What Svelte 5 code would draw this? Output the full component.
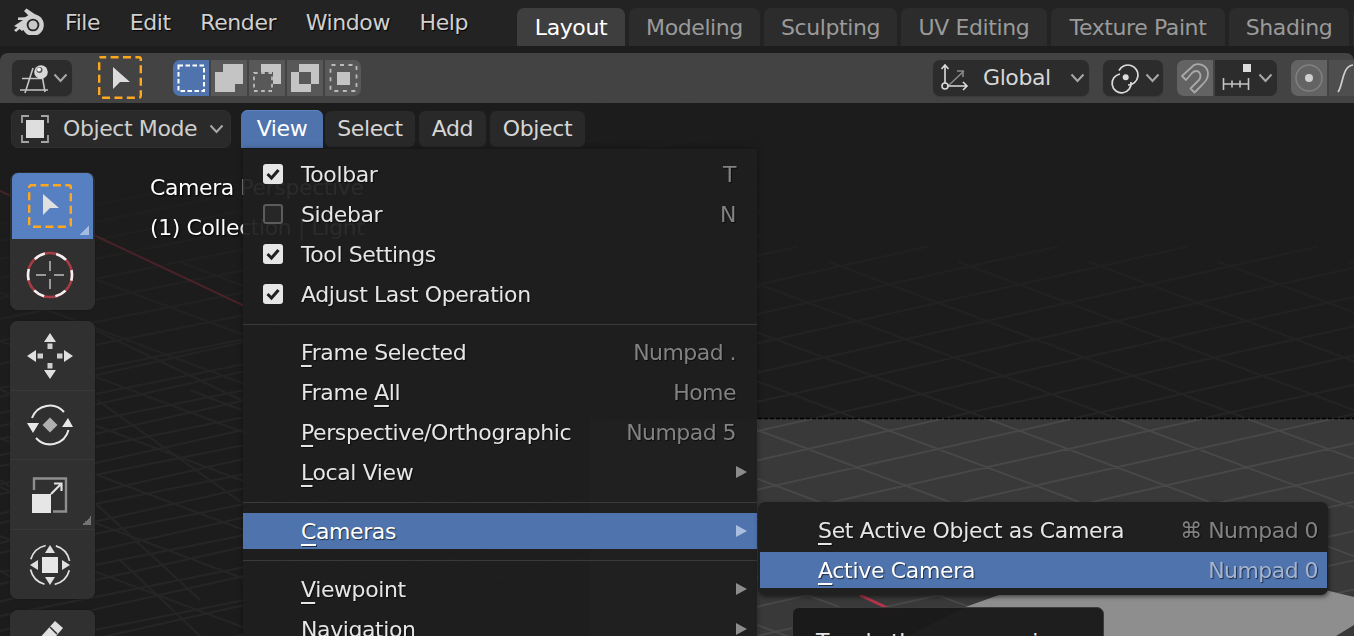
<script>
  const W = 1354, H = 533;
  const clip = (a, b) => `M${a[0]} ${a[1]}L${b[0]} ${b[1]}`;
  const famA = [], famB = [];
  for (let i = -8; i < 14; i++) {
    const x0 = 808 + i * 130;
    famA.push(clip([x0 - 500, 449 - 500 * 0.375], [x0 + 700, 449 + 700 * 0.375]));
  }
  for (let i = -8; i < 20; i++) {
    const x0 = 808 + i * 130;
    famB.push(clip([x0 - 900, 449 + 900 * 0.225], [x0 + 900, 449 - 900 * 0.225]));
  }
  const farLines = [];
  for (let y = 205, s = 17, i = 0; i < 18; i++) {
    farLines.push(clip([0, y + 95 * 0.2], [760, y - 665 * 0.2]));
    y += s; s += 1;
  }
  const steep = [[97,400,241,502],[95,503,200,600],[190,390,241,410],[0,480,60,520],[0,570,30,590],[95,330,241,400],[120,560,200,636]];
  const gridD = [...famA, ...famB].join('');
  const farD = farLines.join('') + steep.map(s => clip([s[0], s[1]], [s[2], s[3]])).join('');

  const menus = ['File', 'Edit', 'Render', 'Window', 'Help'];
  const tabs = [
    { n: 'Layout', w: 108, on: true }, { n: 'Modeling', w: 131 }, { n: 'Sculpting', w: 133 },
    { n: 'UV Editing', w: 146 }, { n: 'Texture Paint', w: 174 }, { n: 'Shading', w: 120 }, { n: '', w: 130 }
  ];
  const checks = [
    { t: 'Toolbar', k: 'T', c: true }, { t: 'Sidebar', k: 'N', c: false },
    { t: 'Tool Settings', c: true }, { t: 'Adjust Last Operation', c: true }
  ];
  const views = [
    { a: '', u: 'F', b: 'rame Selected', k: 'Numpad .' }, { a: 'Frame ', u: 'A', b: 'll', k: 'Home' },
    { a: '', u: 'P', b: 'erspective/Orthographic', k: 'Numpad 5' }, { a: '', u: 'L', b: 'ocal View', sub: true }
  ];
  const lower = [
    { a: '', u: 'V', b: 'iewpoint', sub: true }, { a: '', u: 'N', b: 'avigation', sub: true }
  ];
</script>

{#snippet chevron()}
  <svg class="chev" width="15" height="10" viewBox="0 0 15 10"><path d="M1.500 1.500 7.500 8l6-6.500" /></svg>
{/snippet}
{#snippet arrow()}
  <svg class="subarrow" width="12" height="14" viewBox="0 0 12 14"><path d="M1 1l11 6-11 6z" /></svg>
{/snippet}

<div class="app">
  <header class="topbar">
    <svg class="logo" width="32" height="28" viewBox="0 0 32 28">
      <path class="lg" d="M1 19 10 13 5 13 5 10.500 17 10 11 4 13.500 1.500 26 10 9 24 6.500 22 3 25 1 23 4.500 20.500Z" />
      <circle class="lg" cx="20" cy="18" r="10.800" />
      <circle cx="20" cy="18" r="6.300" fill="#232323" />
      <circle cx="20" cy="18" r="4.500" fill="#c8c8c8" />
    </svg>
    <nav class="menus">
      {#each menus as m}<span>{m}</span>{/each}
    </nav>
    <div class="tabs">
      {#each tabs as t}
        <div class="tab" class:on={t.on} style="width:{t.w}px">{t.n}</div>
      {/each}
    </div>
  </header>

  <section class="toolsettings">
    <div class="pill orient">
      <svg width="30" height="36" viewBox="0 0 30 36">
        <g stroke="#c4c4c4" stroke-width="1.600" fill="none">
          <path d="M2 18.500H22M0 30H28M13 8 5 33M22 15l3 17" />
        </g>
        <circle cx="21" cy="12" r="6.800" fill="#d8d8d8" />
        <circle cx="19.500" cy="10" r="3" fill="#555" />
        <circle cx="19" cy="9.500" r="2" fill="#f4f4f4" />
      </svg>
      {@render chevron()}
    </div>
    <div class="activetool">
      <svg width="44" height="43" viewBox="0 0 44 43">
        <rect x="1.200" y="1.200" width="41.600" height="40.600" rx="2" fill="none" stroke="#ffa81f" stroke-width="2.400" stroke-dasharray="8 4.400" stroke-dashoffset="3" />
        <path d="M15 11 32 26H22L15 33Z" fill="#dcdcdc" />
      </svg>
    </div>
    <div class="modes">
      <div class="mode first">
        <svg width="36" height="36"><rect x="5.500" y="5.500" width="25.500" height="25.500" fill="none" stroke="#fff" stroke-width="2" stroke-dasharray="4.500 2.500" /></svg>
      </div>
      <div class="mode">
        <svg width="36" height="36"><path d="M12 4H32V24H24V32H4V12H12Z" fill="#c4c4c4" /></svg>
      </div>
      <div class="mode">
        <svg width="36" height="36">
          <path d="M12 4H32V24H24V12H12Z" fill="#c4c4c4" />
          <path d="M5 13H23V31H5Z" fill="none" stroke="#bbb" stroke-width="1.800" stroke-dasharray="3.600 3.600" />
        </svg>
      </div>
      <div class="mode">
        <svg width="36" height="36"><path fill-rule="evenodd" d="M12 4H32V24H24V32H4V12H12ZM12 12V24H24V12Z" fill="#c4c4c4" /></svg>
      </div>
      <div class="mode last">
        <svg width="36" height="36">
          <rect x="5.500" y="5" width="26" height="26" rx="1" fill="none" stroke="#bbb" stroke-width="1.800" stroke-dasharray="4 4.500" />
          <rect x="12" y="12" width="13" height="13" fill="#c4c4c4" />
        </svg>
      </div>
    </div>
    <div class="spacer"></div>
    <div class="pill global">
      <svg width="32" height="36" viewBox="0 0 32 36">
        <path d="M9 26 25 11M24 17V11H18" fill="none" stroke="#8c8c8c" stroke-width="1.500" />
        <path d="M6 26V5M2.500 9 6 5l3.500 4M6 26H28M24 22l4 4-4 4" fill="none" stroke="#dcdcdc" stroke-width="1.600" />
        <circle cx="6" cy="26" r="3" fill="#2c2c2c" stroke="#dcdcdc" stroke-width="1.600" />
      </svg>
      <span>Global</span>
      {@render chevron()}
    </div>
    <div class="pill pivot">
      <svg width="36" height="36" viewBox="0 0 36 36">
        <g fill="none" stroke="#dcdcdc" stroke-width="1.700">
          <path d="M16 10.500A10 10 0 1 1 25 25" />
          <path d="M17 14A9.500 9.500 0 1 0 28 22" />
        </g>
        <circle cx="22.700" cy="17.300" r="3" fill="#dcdcdc" />
      </svg>
      {@render chevron()}
    </div>
    <div class="pillgroup snap">
      <div class="lit">
        <svg width="36" height="36" viewBox="0 0 36 36">
          <path d="M5 16 17 5C24 2 31 7 31 14 31 19 28 22 24 26L17.500 32.500 13.500 28.500 22 20C25 16 23 11 19 11 17 11 16 12 15 13L9 20Z" fill="none" stroke="#a9a9a9" stroke-width="1.800" stroke-linejoin="round" />
        </svg>
      </div>
      <div class="dark">
        <svg width="38" height="36" viewBox="0 0 38 36">
          <path d="M8.500 18V30M8.500 24H33.500M17 20.500V27.500M25 20.500V27.500M33.500 18V30" stroke="#c4c4c4" stroke-width="1.600" fill="none" />
          <rect x="28" y="4" width="8" height="8" fill="#dcdcdc" />
        </svg>
        {@render chevron()}
      </div>
    </div>
    <div class="pillgroup prop">
      <div class="lit">
        <svg width="36" height="36" viewBox="0 0 36 36">
          <circle cx="18" cy="18" r="13" fill="none" stroke="#808080" stroke-width="1.500" />
          <circle cx="18" cy="18" r="4" fill="#cfcfcf" />
        </svg>
      </div>
      <div class="dim">
        <svg width="30" height="36" viewBox="0 0 30 36">
          <path d="M9 32C14 26 13 6 24 5" fill="none" stroke="#cfcfcf" stroke-width="1.700" />
        </svg>
      </div>
    </div>
  </section>

  <main class="viewport">
    <svg class="scene" width={W} height={H} viewBox="0 103 {W} {H}">
      <defs>
        <clipPath id="floor"><rect x="590" y="419" width="764" height="217" /></clipPath>
        <clipPath id="dark"><path d="M0 103H1354V419H590V636H0Z" /></clipPath>
        <linearGradient id="fade" gradientUnits="userSpaceOnUse" x1="0" y1="150" x2="0" y2="430">
          <stop offset="0" stop-color="#1d1d1d" />
          <stop offset="1" stop-color="#252525" />
        </linearGradient>
      </defs>
      <path d={gridD} stroke="url(#fade)" stroke-width="2" fill="none" clip-path="url(#dark)" />
      <path d={farD} stroke="url(#fade)" stroke-width="2" fill="none" clip-path="url(#dark)" />
      <path d="M0 191 1000 661" stroke="#4a2228" stroke-width="2" fill="none" clip-path="url(#dark)" />
      <rect x="590" y="419" width="764" height="217" fill="#393939" />
      <path d={gridD} stroke="#484848" stroke-width="2" fill="none" clip-path="url(#floor)" />
      <path d="M968 606 1140 545 1354 597V625L1336 636H900V640Z" fill="#8e8e8e" />
      <path d="M860 595 900 614" stroke="#b5354c" stroke-width="3" fill="none" />
      <path d="M590 418.500H1354" stroke="#000" stroke-width="1.500" stroke-dasharray="4 2" />
    </svg>

    <div class="headerrow">
      <div class="modepick">
        <svg width="30" height="30" viewBox="0 0 30 30">
          <path d="M2 9V2H9M21 2H28V9M2 21V28H9M21 28H28V21" fill="none" stroke="#a4a4a4" stroke-width="1.800" />
          <rect x="6" y="6" width="18" height="18" fill="#dedede" />
        </svg>
        <span>Object Mode</span>
        {@render chevron()}
      </div>
      <div class="hbtn viewbtn">View</div>
      <div class="hbtn w90">Select</div>
      <div class="hbtn w67">Add</div>
      <div class="hbtn w95">Object</div>
    </div>

    <div class="body">
      <div class="toolbar">
        <div class="toolgroup g1">
          <div class="tool active">
            <svg width="44" height="44" viewBox="0 0 44 44">
              <rect x="1.200" y="1.200" width="41.600" height="41.600" rx="2" fill="none" stroke="#ffa81f" stroke-width="2.400" stroke-dasharray="8 4.400" stroke-dashoffset="3" />
              <path d="M15 10 31 24H22L15 31Z" fill="#e0e0e0" />
            </svg>
            <i class="corner light"></i>
          </div>
          <div class="tool cursor">
            <svg width="48" height="48" viewBox="0 0 48 48">
              <circle cx="24" cy="24" r="22" fill="none" stroke="#a63c45" stroke-width="2.600" />
              <circle cx="24" cy="24" r="22" fill="none" stroke="#f2f2f2" stroke-width="2.600" stroke-dasharray="11.500 11.500" stroke-dashoffset="5.700" />
              <path d="M24 10V20M24 28V38M10 24H20M28 24H38" stroke="#bdbdbd" stroke-width="1.500" />
            </svg>
          </div>
        </div>
        <div class="toolgroup g2">
          <div class="tool t69">
            <svg width="48" height="48" viewBox="0 0 48 48">
              <path d="M24 1 30 10H18ZM24 47 18 38H30ZM1 24 10 18V30ZM47 24 38 30V18Z" fill="#e0e0e0" />
              <path d="M21.500 11.500H26.500V17H21.500ZM21.500 31H26.500V36.500H21.500ZM11.500 21.500H17V26.500H11.500ZM31 21.500H36.500V26.500H31Z" fill="#cfcfcf" />
            </svg>
          </div>
          <div class="tool t69 line">
            <svg width="48" height="48" viewBox="0 0 48 48">
              <path d="M24 16.500 31.500 24 24 31.500 16.500 24Z" fill="#b0b0b0" />
              <path d="M6 17A19 19 0 0 1 38 11M42.500 29A19 19 0 0 1 10 37" fill="none" stroke="#e8e8e8" stroke-width="2" />
              <path d="M1 22H13L7 32ZM36 26H47L42 17Z" fill="#e8e8e8" />
            </svg>
          </div>
          <div class="tool t71 line">
            <svg width="36" height="36" viewBox="0 0 36 36">
              <path d="M2 13V1.500H34V34.500H21" fill="none" stroke="#8e8e8e" stroke-width="2.400" />
              <path d="M19 17 29 7M22 6.500H29.500V14" fill="none" stroke="#e0e0e0" stroke-width="2.200" />
              <rect x="0" y="17" width="19" height="19" fill="#e6e6e6" />
            </svg>
            <i class="corner"></i>
          </div>
          <div class="tool rest line">
            <svg width="44" height="44" viewBox="0 0 44 44">
              <circle cx="22" cy="22" r="20" fill="none" stroke="#e0e0e0" stroke-width="1.700" stroke-dasharray="21 10.400" stroke-dashoffset="26" />
              <rect x="14" y="14" width="16" height="16" fill="#e6e6e6" />
              <path d="M22 2 27 10H17ZM22 42 17 34H27ZM2 22 10 17V27ZM42 22 34 27V17Z" fill="#e0e0e0" />
            </svg>
          </div>
        </div>
        <div class="toolgroup g3">
          <div class="tool t69 pencil">
            <svg width="30" height="30" viewBox="0 0 30 30">
              <path d="M20 2 28 9 10 30H2V22Z" fill="#e0e0e0" />
              <path d="M15 8 22 15" stroke="#303030" stroke-width="1.600" />
            </svg>
          </div>
        </div>
      </div>
      <div class="overlaytext">
        <p>Camera Perspective</p>
        <p>(1) Collection | Light</p>
      </div>
    </div>

    <div class="viewmenu">
      {#each checks as c}
        <div class="row">
          <span class="box" class:checked={c.c}>
            {#if c.c}<svg width="20" height="20" viewBox="0 0 20 20"><path d="M4.500 10 8.500 14 15.500 6" fill="none" stroke="#1f1f1f" stroke-width="3" /></svg>{/if}
          </span>
          <span class="lab">{c.t}</span>
          {#if c.k}<span class="key">{c.k}</span>{/if}
        </div>
      {/each}
      <div class="sep"></div>
      {#each views as v}
        <div class="row">
          <span class="lab">{v.a}<u>{v.u}</u>{v.b}</span>
          {#if v.k}<span class="key">{v.k}</span>{/if}
          {#if v.sub}{@render arrow()}{/if}
        </div>
      {/each}
      <div class="sep wide"></div>
      <div class="row current">
        <div class="hl"><span class="lab"><u>C</u>ameras</span>{@render arrow()}</div>
      </div>
      <div class="sep low"></div>
      {#each lower as v}
        <div class="row">
          <span class="lab">{v.a}<u>{v.u}</u>{v.b}</span>
          {@render arrow()}
        </div>
      {/each}
    </div>

    <div class="submenu">
      <div class="srow"><span class="lab"><u>S</u>et Active Object as Camera</span><span class="key">⌘ Numpad 0</span></div>
      <div class="srow on"><span class="lab"><u>A</u>ctive Camera</span><span class="key">Numpad 0</span></div>
    </div>

    <div class="tooltip">Toggle the camera view</div>
  </main>
</div>

<style>
  :global(body) { margin: 0; background: #1c1c1c; }
  .app {
    width: 1354px; height: 636px; overflow: hidden; position: relative;
    display: flex; flex-direction: column; background: #1d1d1d;
    font-family: "DejaVu Sans", sans-serif; font-size: 22px; letter-spacing: -0.4px; color: #d6d6d6;
  }
  svg { display: block; flex: none; }
  .topbar { height: 46px; flex: none; display: flex; background: #232323; }
  .logo { margin: 7px 0 0 13px; }
  .lg { fill: #d0d0d0; }
  .menus { display: flex; gap: 29.500px; margin-left: 20px; padding-top: 9px; line-height: 28px; color: #d0d0d0; text-shadow: 1px 1px 1px #000; }
  .tabs { display: flex; gap: 4px; position: absolute; left: 517px; top: 8px; }
  .tab {
    height: 38px; box-sizing: border-box; padding-top: 7px; text-align: center; line-height: 26px;
    background: #2c2c2c; color: #9a9a9a; border-radius: 7px 7px 0 0; white-space: nowrap;
  }
  .tab.on { background: #3e3e3e; color: #fff; }

  .toolsettings {
    height: 50px; flex: none; margin-top: 7px; background: #434343; border-radius: 8px 8px 0 0;
    display: flex; align-items: center; padding-left: 12px; box-sizing: border-box;
  }
  .pill {
    height: 36px; background: #2c2c2c; border-radius: 7px; display: flex; align-items: center;
    box-sizing: border-box; box-shadow: 0 1px 1px #3a3a3a;
  }
  .chev path { fill: none; stroke: #a8a8a8; stroke-width: 2; }
  .orient { width: 60px; padding-left: 8px; gap: 0; }
  .orient .chev { margin-left: 3px; }
  .activetool { margin-left: 26px; margin-top: -1px; }
  .modes { display: flex; gap: 2px; margin-left: 31px; }
  .mode { width: 36px; height: 36px; background: #585858; }
  .mode.first { background: #4e73ad; border-radius: 7px 0 0 7px; }
  .mode.last { border-radius: 0 7px 7px 0; }
  .spacer { flex: 1; }
  .global { width: 156px; padding-left: 6px; color: #d6d6d6; }
  .global span { margin-left: 12px; width: 87px; margin-top: -2px; }
  .pivot { width: 60px; margin-left: 14px; }
  .pivot .chev { margin-left: 6px; }
  .pillgroup { display: flex; height: 36px; gap: 2px; }
  .snap { margin-left: 14px; }
  .lit { width: 36px; background: #636363; border-radius: 7px 0 0 7px; }
  .dark { width: 62px; background: #2c2c2c; border-radius: 0 7px 7px 0; display: flex; align-items: center; }
  .dark .chev { margin-left: 5px; }
  .prop { margin-left: 14px; }
  .dim { width: 25px; background: #4e4e4e; overflow: hidden; }

  .viewport { flex: 1; position: relative; background: #1c1c1c; display: flex; flex-direction: column; overflow: hidden; }
  .scene { position: absolute; left: 0; top: 0; }
  .headerrow { position: relative; display: flex; height: 38px; margin: 7px 0 0 11px; gap: 4px; align-items: center; }
  .modepick {
    width: 220px; height: 38px; box-sizing: border-box; border: 1px solid #2f2f2f; border-radius: 7px; background: #2a2a2a;
    display: flex; align-items: center; padding-left: 8px; margin-right: 6px; color: #cfcfcf;
  }
  .modepick span { margin-left: 13px; width: 146px; white-space: nowrap; margin-top: -2px; }
  .modepick .chev { margin-left: 0; }
  .hbtn { height: 36px; background: #292929; border-radius: 6px; text-align: center; line-height: 36px; color: #d6d6d6; }
  .viewbtn { width: 82px; height: 38px; line-height: 38px; background: #4e73ad; color: #fff; border-radius: 7px 7px 0 0; box-shadow: inset 0 1px #5d84c2; margin-right: -2px; }
  .w90 { width: 90px; } .w67 { width: 67px; } .w95 { width: 95px; }

  .body { position: relative; display: flex; padding: 24px 0 0 10px; }
  .toolbar { width: 85px; display: flex; flex-direction: column; gap: 11px; flex: none; }
  .toolgroup { background: #303030; border-radius: 8px; overflow: hidden; box-shadow: 0 0 2px #161616; flex: none; }
  .g1 { padding-top: 1px; background: #2c2c2c; }
  .tool { position: relative; display: flex; align-items: center; justify-content: center; padding-right: 5px; background: #303030; }
  .active { height: 66px; background: #5680c2; margin: 0 2px; padding-right: 5px; border-radius: 6px 6px 0 0; }
  .cursor { height: 71px; }
  .t69 { height: 69px; } .t71 { height: 70px; } .rest { height: 70px; }
  .line { border-top: 1px solid #383838; box-sizing: border-box; }
  .pencil { align-items: flex-start; padding-top: 9px; box-sizing: border-box; }
  .corner {
    position: absolute; right: 4px; bottom: 4px; width: 9px; height: 9px;
    background: linear-gradient(135deg, transparent 50%, #737373 50%);
  }
  .corner.light { background: linear-gradient(135deg, transparent 50%, #a3bce0 50%); }
  .overlaytext { margin-left: 55px; margin-top: 1px; color: #fff; text-shadow: 1px 1px 2px #000; white-space: nowrap; will-change: transform; }
  .overlaytext p { margin: 0; height: 40px; line-height: 30px; }

  .viewmenu {
    position: absolute; left: 243px; top: 46px; width: 514px; padding-top: 5px;
    background: rgba(31, 31, 31, 0.95); box-shadow: 0 0 6px rgba(0,0,0,.35);
    color: #e6e6e6; text-shadow: 1px 1px 1px rgba(0,0,0,.6);
  }
  .row { height: 40px; display: flex; align-items: center; position: relative; padding: 0 21px 0 58px; }
  .row u, .srow u { text-underline-offset: 5px; text-decoration-thickness: 2px; text-decoration-skip-ink: none; }
  .row .lab { flex: 1; }
  .key { color: #828282; white-space: nowrap; letter-spacing: -0.55px; }
  .box { position: absolute; left: 20px; top: 10px; width: 20px; height: 20px; box-sizing: border-box; border-radius: 3px; border: 2px solid #5c5c5c; background: #272727; }
  .box.checked { border: 0; background: #e6e6e6; }
  .subarrow { margin-right: -11px; }
  .subarrow path { fill: #8c8c8c; }
  .sep { height: 18px; position: relative; }
  .sep::after { content: ""; position: absolute; left: 0; right: 0; top: 10px; height: 1px; background: #3a3a3a; }
  .sep.wide { height: 19px; }
  .sep.low::after { top: 9px; }
  .current { padding: 0; }
  .hl { flex: 1; height: 36px; background: #4e73ad; color: #fff; display: flex; align-items: center; padding: 0 10px 0 58px; }
  .hl .subarrow { margin-right: 0; }
  .hl .subarrow path { fill: #a9bfe0; }

  .submenu {
    position: absolute; left: 758px; top: 399px; width: 570px; height: 93px; box-sizing: border-box; padding: 9px 1px 0 2px;
    background: #202020; border-radius: 7px; box-shadow: 1px 2px 4px rgba(0,0,0,.5);
    color: #e6e6e6; text-shadow: 1px 1px 1px rgba(0,0,0,.6);
  }
  .srow { height: 41px; padding: 0 9px 3px 58px; box-sizing: border-box; display: flex; align-items: center; justify-content: space-between; white-space: nowrap; letter-spacing: -0.33px; }
  .srow.on { height: 36px; padding-bottom: 0; background: #4e73ad; color: #fff; }
  .srow.on .key { color: #a4b4d0; }
  .tooltip {
    position: absolute; left: 792px; top: 504px; width: 312px; height: 80px; box-sizing: border-box;
    padding: 21px 0 0 23px; line-height: 26px; white-space: nowrap;
    background: rgba(24, 24, 24, 0.95); border: 1px solid #3c3c3c; border-radius: 7px; color: #e6e6e6;
  }
</style>
